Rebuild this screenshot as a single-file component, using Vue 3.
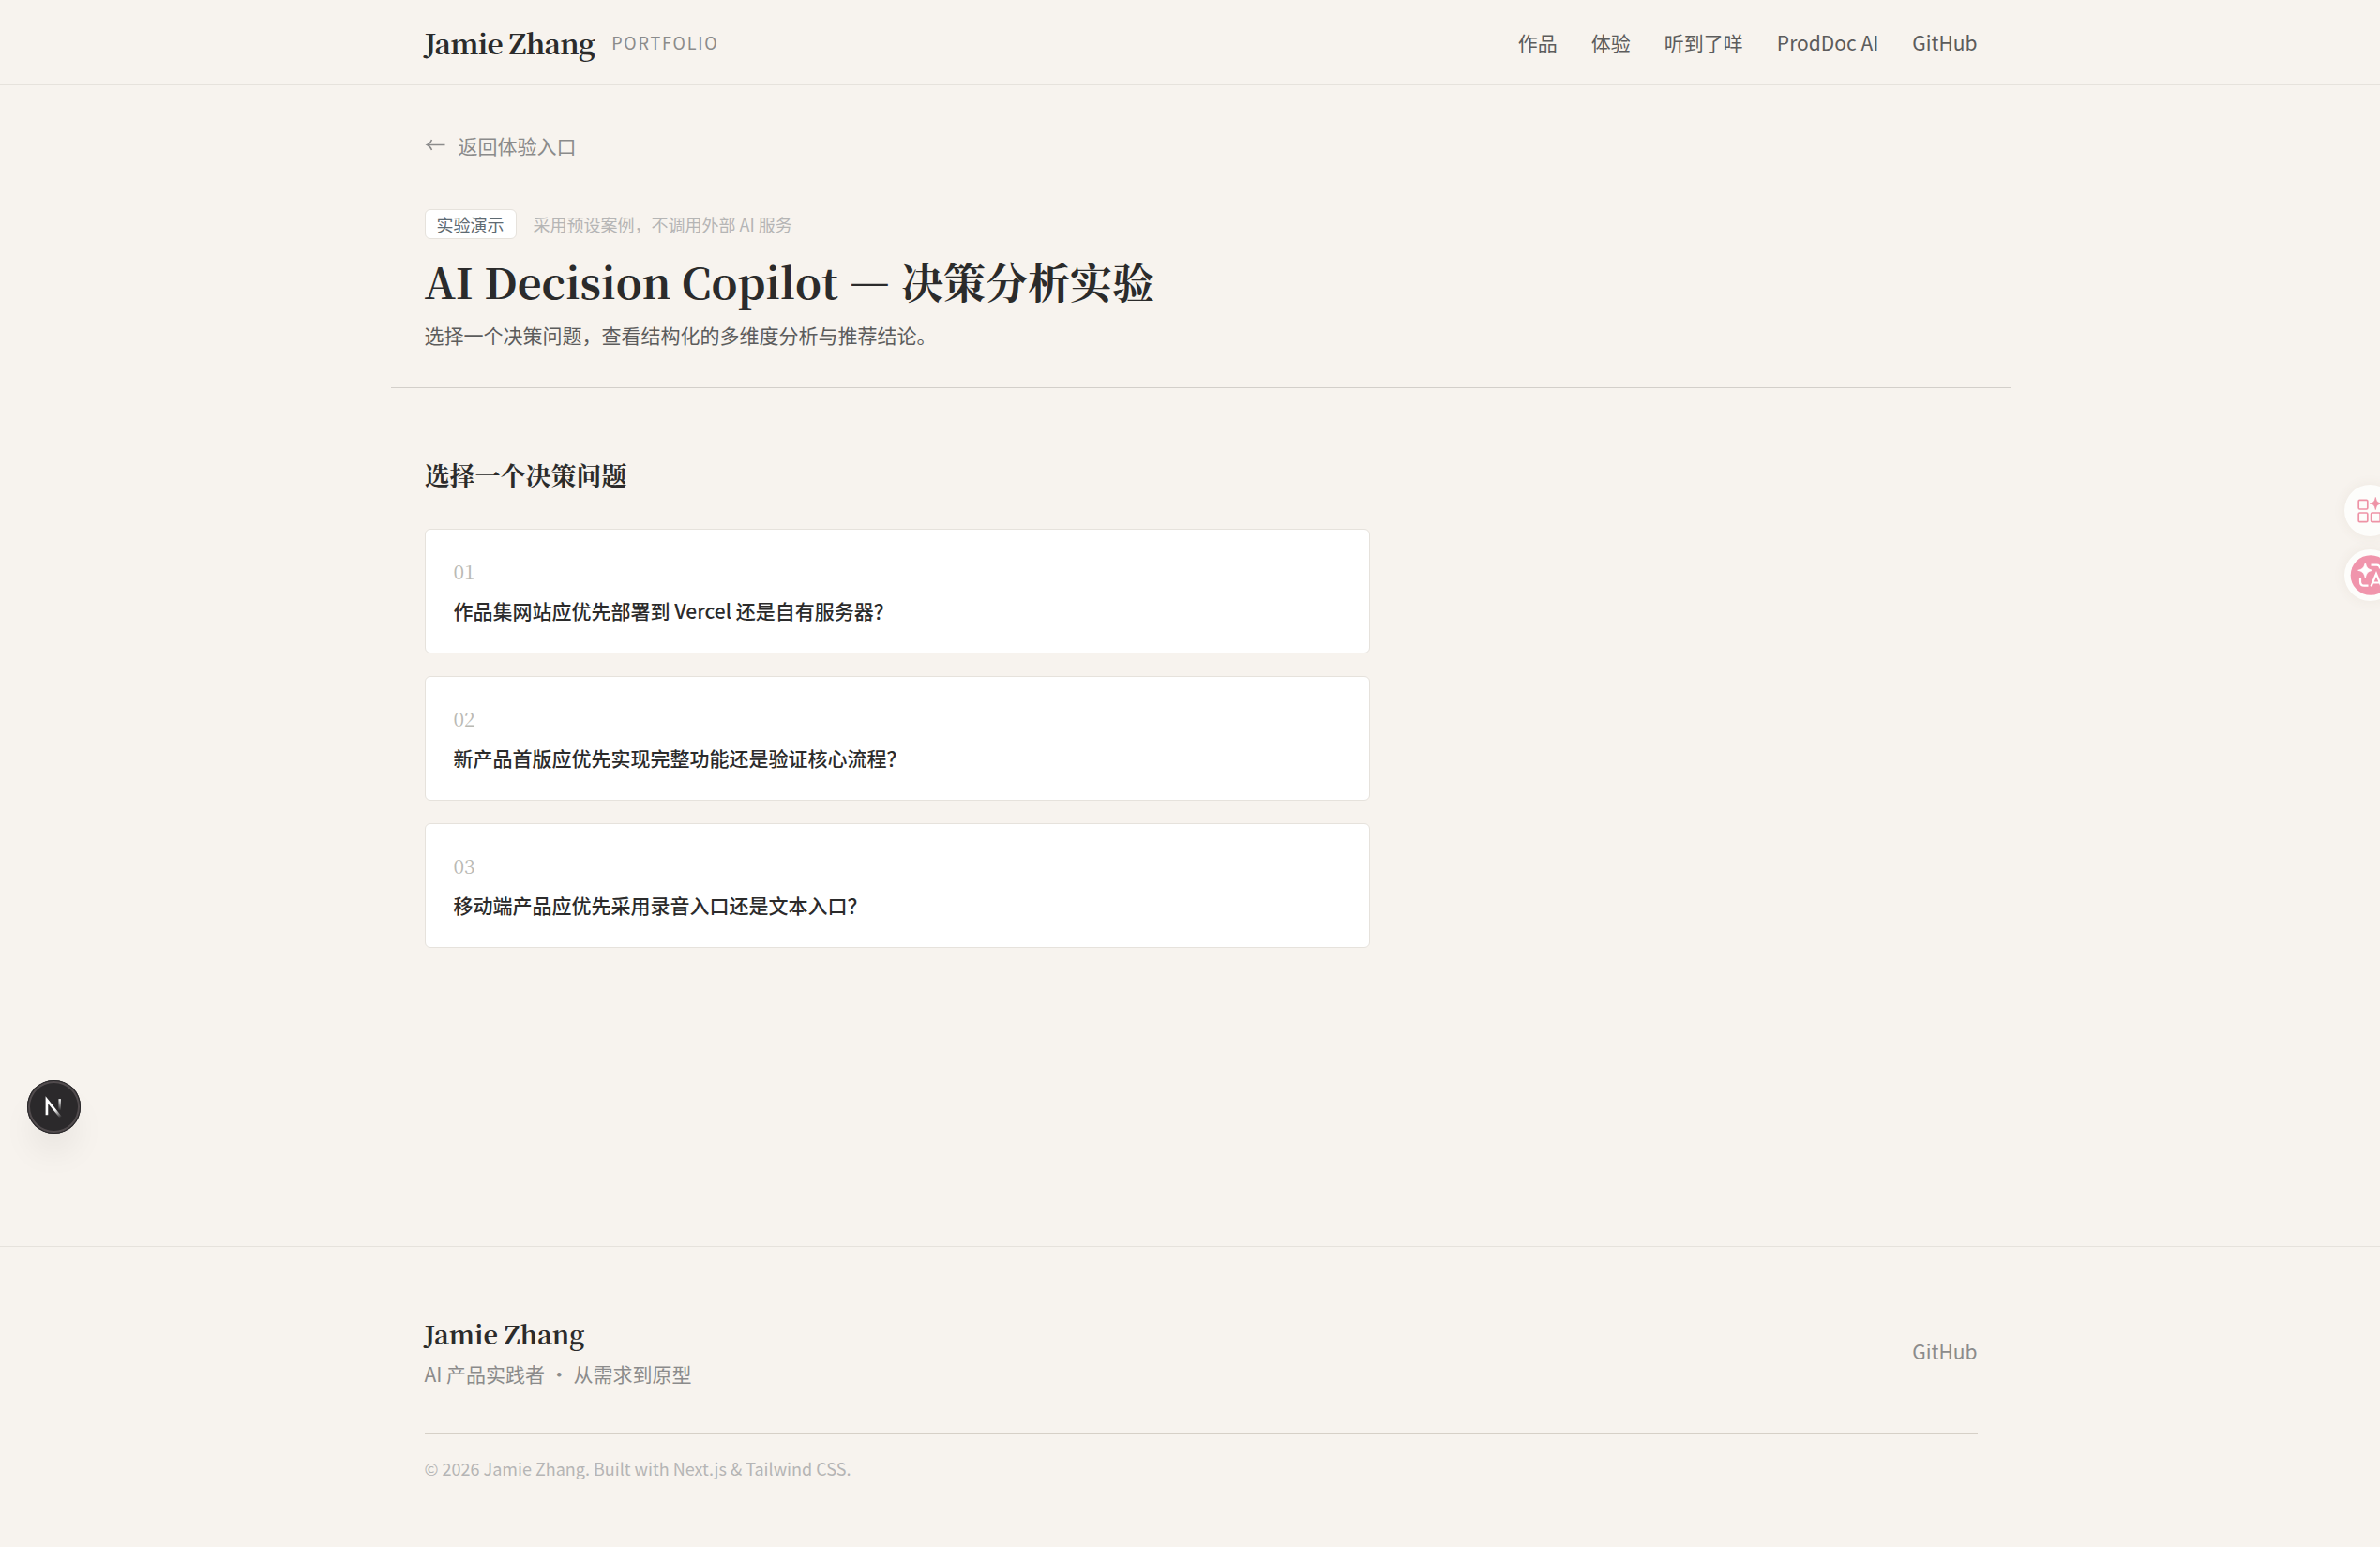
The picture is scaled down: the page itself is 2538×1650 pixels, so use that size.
<script setup>
const nav = ['作品', '体验', '听到了咩', 'ProdDoc AI', 'GitHub']
const questions = [
  { id: '01', text: '作品集网站应优先部署到 Vercel 还是自有服务器？' },
  { id: '02', text: '新产品首版应优先实现完整功能还是验证核心流程？' },
  { id: '03', text: '移动端产品应优先采用录音入口还是文本入口？' },
]
</script>

<template>
  <div class="page">
    <header class="site-header">
      <div class="container header-row">
        <div class="brand">
          <span class="brand-name">Jamie Zhang</span>
          <span class="brand-tag">PORTFOLIO</span>
        </div>
        <nav class="nav">
          <a v-for="item in nav" :key="item">{{ item }}</a>
        </nav>
      </div>
    </header>

    <main class="main">
      <section class="container intro">
        <a class="back">
          <svg width="24" height="24" viewBox="0 0 24 24" fill="none" stroke="currentColor" stroke-width="1.5">
            <path d="M21.500 10.500H2.500M7.500 5C6.500 7.500 5 9.500 2.500 10.500C5 11.500 6.500 13.500 7.500 16" />
          </svg>
          <span>返回体验入口</span>
        </a>
        <div class="meta">
          <span class="badge">实验演示</span>
          <span class="note">采用预设案例，不调用外部 AI 服务</span>
        </div>
        <h1>AI Decision Copilot <span class="dash">—</span> 决策分析实验</h1>
        <p class="lead">选择一个决策问题，查看结构化的多维度分析与推荐结论。</p>
      </section>

      <section class="container picker">
        <h2>选择一个决策问题</h2>
        <ul class="cards">
          <li v-for="q in questions" :key="q.id" class="card">
            <span class="num">{{ q.id }}</span>
            <span class="question">{{ q.text }}</span>
          </li>
        </ul>
      </section>
    </main>

    <footer class="site-footer">
      <div class="container">
        <div class="footer-row">
          <div>
            <div class="footer-name">Jamie Zhang</div>
            <div class="tagline">AI 产品实践者 · 从需求到原型</div>
          </div>
          <a class="footer-link">GitHub</a>
        </div>
        <div class="copyright">© 2026 Jamie Zhang. Built with Next.js &amp; Tailwind CSS.</div>
      </div>
    </footer>

    <div class="dev-badge">
      <svg width="57" height="57" viewBox="0 0 58 58" fill="none">
        <defs>
          <linearGradient id="diag" x1="32" y1="31" x2="37" y2="40" gradientUnits="userSpaceOnUse">
            <stop stop-color="#fff" />
            <stop offset="1" stop-color="#fff" stop-opacity="0" />
          </linearGradient>
          <linearGradient id="stem" x1="35" y1="20" x2="35" y2="33" gradientUnits="userSpaceOnUse">
            <stop stop-color="#fff" />
            <stop offset="1" stop-color="#fff" stop-opacity="0" />
          </linearGradient>
        </defs>
        <path d="M21.300 38V21.500L36.500 40.500" stroke="url(#diag)" stroke-width="2.700" />
        <path d="M35.300 20.500V33.500" stroke="url(#stem)" stroke-width="2.500" />
      </svg>
    </div>

    <div class="float-btn float-top">
      <svg width="55" height="55" viewBox="0 0 55 55" fill="none" stroke="#ee93a6" stroke-width="1.700">
        <rect x="15.200" y="16.400" width="9.600" height="9.600" rx="1.200" />
        <rect x="15.200" y="30" width="9.600" height="9.600" rx="1.200" />
        <rect x="28.600" y="30" width="9.600" height="9.600" rx="1.200" />
        <path d="M33.300 13.500C34.300 18 35 19 39.500 20C35 21 34.300 22 33.300 26.500C32.300 22 31.600 21 27.100 20C31.600 19 32.300 18 33.300 13.500Z" fill="#ee93a6" stroke="#ee93a6" stroke-width="0.800" />
      </svg>
    </div>
    <div class="float-btn float-bottom">
      <svg width="55" height="55" viewBox="0 0 55 55" fill="none" stroke="#fff" stroke-width="2.200">
        <circle cx="28" cy="27.500" r="21.300" fill="#f095ac" stroke="none" />
        <path d="M22.300 14C23.600 19.600 24.900 21 30 22.300C24.900 23.600 23.600 25 22.300 30.600C21 25 19.700 23.600 14.600 22.300C19.700 21 21 19.600 22.300 14Z" fill="#fff" stroke="#fff" stroke-width="0.800" />
        <path d="M28.500 16.700H34.500Q38 16.700 38 20.500" />
        <path d="M17 30.500V34.500Q17 38.700 21.200 38.700H25.500" />
        <path d="M28.500 39.500L34 26L39.500 39.500M30.500 35.500H38" />
      </svg>
    </div>
  </div>
</template>

<style>
body {
  background: #f7f3ee;
  overflow: hidden;
}
</style>

<style scoped>
.page {
  position: relative;
  height: 1650px;
  overflow: hidden;
  background: #f7f3ee;
  color: #2b2b2b;
  font-family: "Noto Sans CJK SC", sans-serif;
  font-size: 21px;
  line-height: 31.5px;
}
.container {
  box-sizing: border-box;
  width: 1728px;
  margin-left: 416.5px;
  padding: 0 36px;
}
.site-header {
  height: 90px;
  border-bottom: 1px solid #e6e2dc;
}
.header-row {
  height: 90px;
  display: flex;
  align-items: center;
  justify-content: space-between;
}
.brand {
  display: flex;
  align-items: center;
  gap: 18px;
}
.brand-name,
.footer-name,
h1,
h2,
.num {
  font-family: "Noto Serif CJK SC", "Noto Serif SC", "Source Han Serif SC", "Liberation Serif", "Noto Sans CJK SC", serif;
}
.brand-name {
  font-size: 30px;
  font-weight: 700;
  line-height: 42px;
  letter-spacing: -0.75px;
}
.brand-tag {
  font-size: 18px;
  line-height: 24px;
  letter-spacing: 1.8px;
  color: #8b8b8b;
}
.nav {
  display: flex;
  gap: 36px;
  padding-top: 2px;
  color: #5c5c5c;
}
.intro {
  height: 323px;
  padding-top: 49px;
  border-bottom: 1px solid #d3cfca;
}
.back {
  display: flex;
  align-items: center;
  gap: 12px;
  color: #8b8b8b;
}
.meta {
  display: flex;
  align-items: center;
  gap: 18px;
  margin-top: 51px;
  font-size: 18px;
}
.badge {
  box-sizing: border-box;
  height: 32px;
  padding: 0 12px;
  line-height: 30px;
  border: 1px solid #e6e2dc;
  border-radius: 6px;
  background: #fff;
  color: #5e6a72;
}
.note {
  padding-top: 1px;
  color: #b5b5b5;
}
h1 {
  margin: 17px 0 0;
  font-size: 45px;
  font-weight: 700;
  line-height: 56px;
}
.dash {
  display: inline-block;
  width: 45px;
  line-height: 46px;
  text-align: center;
  font-weight: 400;
  transform: translateY(-3px) scaleX(1.07);
}
h2 {
  margin: 0;
  font-size: 27px;
  font-weight: 700;
  line-height: 42px;
}
.lead {
  margin: 14px 0 0;
  color: #5c5c5c;
}
.picker {
  padding-top: 72px;
}
.cards {
  list-style: none;
  width: 1008px;
  margin: 36px 0 0;
  padding: 0;
  display: flex;
  flex-direction: column;
  gap: 24px;
}
.card {
  box-sizing: border-box;
  height: 133px;
  padding: 29px 30px;
  display: flex;
  flex-direction: column;
  gap: 10px;
  border: 1px solid #e6e2dc;
  border-radius: 6px;
  background: #fff;
}
.num {
  color: #b9b9b4;
}
.question {
  font-weight: 500;
}
.site-footer {
  margin-top: 318px;
  border-top: 1px solid #e6e2dc;
}
.footer-row {
  box-sizing: border-box;
  display: flex;
  align-items: center;
  justify-content: space-between;
  height: 200px;
  padding-top: 26px;
  border-bottom: 2px solid #d6d0c7;
}
.footer-name {
  margin-bottom: 6px;
  font-size: 27px;
  font-weight: 700;
  line-height: 42px;
}
.tagline,
.footer-link {
  color: #8b8b8b;
}
.copyright {
  margin-top: 23px;
  font-size: 18px;
  line-height: 27px;
  color: #b5b5b5;
}
.dev-badge {
  position: absolute;
  left: 28.5px;
  top: 1152px;
  width: 57px;
  height: 57px;
  border-radius: 50%;
  background: #2b292b;
  box-shadow: inset 0 0 0 1px #29282a, inset 0 0 0 3px #514b4d, 0 24px 36px -6px rgba(0, 0, 0, 0.08);
}
.float-btn {
  position: absolute;
  left: 2500px;
  width: 55px;
  height: 55px;
  border-radius: 50%;
  background: #fdfdfb;
  box-shadow: 0 0 14px rgba(120, 80, 50, 0.07);
}
.float-top {
  top: 517px;
}
.float-bottom {
  top: 586px;
}
</style>
